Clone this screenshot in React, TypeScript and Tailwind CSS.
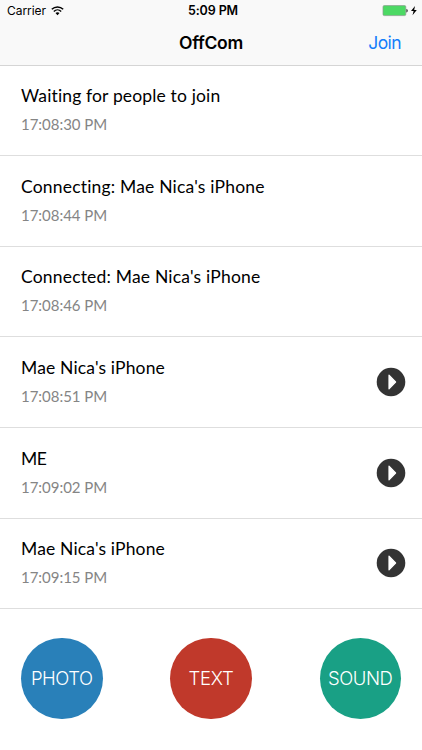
import React from "react";

type Entry = { title: string; time: string; playable?: boolean; tracking: string };

const entries: Entry[] = [
  { title: "Waiting for people to join", time: "17:08:30 PM", tracking: "tracking-[0.15px]" },
  { title: "Connecting: Mae Nica's iPhone", time: "17:08:44 PM", tracking: "tracking-[0.19px]" },
  { title: "Connected: Mae Nica's iPhone", time: "17:08:46 PM", tracking: "tracking-[0.19px]" },
  { title: "Mae Nica's iPhone", time: "17:08:51 PM", playable: true, tracking: "tracking-[0.15px]" },
  { title: "ME", time: "17:09:02 PM", playable: true, tracking: "tracking-[-0.4px]" },
  { title: "Mae Nica's iPhone", time: "17:09:15 PM", playable: true, tracking: "tracking-[0.15px]" },
];

const actions = [
  { label: "PHOTO", color: "bg-[#2980b9]", text: "tracking-[-0.45px]" },
  { label: "TEXT", color: "bg-[#c0392b]", text: "tracking-[-0.2px]" },
  { label: "SOUND", color: "bg-[#19a085]", text: "tracking-[-0.45px]" },
];

function WifiIcon() {
  return (
    <svg className="-mt-px" width="13" height="10" viewBox="0 0 13 10" fill="none" stroke="#000">
      <path d="M0.8 3.3C4 0.2 9 0.2 12.2 3.3" strokeWidth="1.5" />
      <path d="M2.8 5.4C4.9 3.4 8.1 3.4 10.2 5.4" strokeWidth="1.4" />
      <path d="M6.5 9.2L4.5 7.1C5.7 6 7.3 6 8.5 7.1Z" fill="#000" stroke="none" />
    </svg>
  );
}

function BatteryIcon() {
  return (
    <svg width="36" height="12" viewBox="0 0 36 12">
      <rect x="1" y="0.6" width="22.8" height="10" rx="1.3" fill="#4cd964" stroke="#8b9b8e" strokeWidth="0.7" />
      <path d="M24.4 4C26.2 4.3 26.2 7.1 24.4 7.4Z" fill="#333" />
      <path d="M33 1L29 6H31.6L30.5 10.2L34.8 4.9H32.2Z" fill="#000" />
    </svg>
  );
}

function PlayIcon() {
  return (
    <svg width="30" height="30" viewBox="0 0 30 30">
      <circle cx="15" cy="15" r="14.3" fill="#333" />
      <path d="M13 8.2L19.6 15L13 21.8Z" fill="#fff" stroke="#fff" strokeWidth="1.2" strokeLinejoin="round" />
    </svg>
  );
}

export default function App() {
  return (
    <div className="flex h-[750px] w-[422px] flex-col overflow-hidden bg-white font-['Inter',sans-serif] text-black">
      <header className="h-[65.6px] shrink-0 border-b border-[#d5d5d5] bg-[#f9f9f9]">
        <div className="grid h-[22px] grid-cols-3 items-center pl-[7px] pr-[4px] text-[12px] leading-[22px]">
          <div className="flex items-center gap-[5px]">
            <span className="tracking-[-0.05px]">Carrier</span>
            <WifiIcon />
          </div>
          <span className="pl-[1px] text-center text-[12.5px] font-semibold tracking-[-0.1px]">5:09 PM</span>
          <div className="flex justify-end">
            <BatteryIcon />
          </div>
        </div>
        <div className="grid h-[43px] grid-cols-3 items-center px-[21px]">
          <span />
          <h1 className="text-center text-[17.5px] font-semibold tracking-[-0.3px]">OffCom</h1>
          <button className="text-right text-[17.5px] tracking-[-0.6px] text-[#147efb]">Join</button>
        </div>
      </header>

      <ul className="shrink-0 font-['Lato',sans-serif]">
        {entries.map((entry) => (
          <li key={entry.time} className="flex h-[90.6px] items-center justify-between border-b border-[#dedede] pl-[21px] pr-4">
            <div className="flex flex-col pt-[0.6px]">
              <span className={`text-[17.5px] leading-[28px] ${entry.tracking}`}>{entry.title}</span>
              <span className="text-[15px] leading-[29px] tracking-[-0.02px] text-[#858585]">{entry.time}</span>
            </div>
            {entry.playable && <PlayIcon />}
          </li>
        ))}
      </ul>

      <footer className="flex grow items-center justify-between px-[21px] pb-[2px]">
        {actions.map((action) => (
          <button
            key={action.label}
            className={`flex size-[81.5px] items-center justify-center rounded-full text-[18.5px] font-light text-white ${action.color} ${action.text}`}
          >
            {action.label}
          </button>
        ))}
      </footer>
    </div>
  );
}
